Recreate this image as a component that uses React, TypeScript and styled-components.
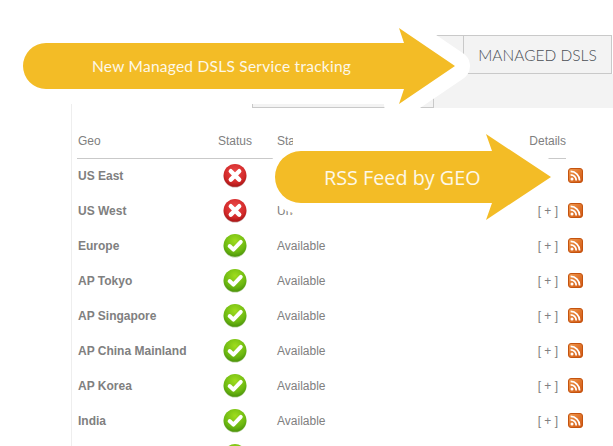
import React from "react";
import styled, { createGlobalStyle } from "styled-components";

const Global = createGlobalStyle`
  html, body { margin: 0; padding: 0; background: #fff; }
  body { font-family: "Liberation Sans", Arial, sans-serif; }
`;

const Page = styled.div`
  position: relative;
  width: 613px;
  height: 446px;
  overflow: hidden;
  background: #fff;
`;

const Header = styled.header`
  height: 108px;
  padding-top: 35px;
  box-sizing: border-box;
  display: flex;
  flex-direction: column;
`;

const TabRow = styled.nav`
  height: 39px;
  display: flex;
  justify-content: flex-end;
  flex: none;
`;

const Tab = styled.div<{ $w: number }>`
  width: ${(p) => p.$w}px;
  box-sizing: border-box;
  background: #f3f3f3;
  border: 1px solid #c9c9c9;
  border-right-width: ${(p) => (p.$w > 100 ? 1 : 0)}px;
  margin-right: ${(p) => (p.$w > 100 ? 1 : 0)}px;
  display: flex;
  align-items: center;
  justify-content: center;
  font-family: "Lato", sans-serif;
  font-weight: 300;
  font-size: 15.5px;
  letter-spacing: 0;
  color: #4a4f55;
`;

const Band = styled.div`
  flex: 1;
  display: flex;
`;

const BandSpacer = styled.div`
  width: 252px;
`;

const SelectBox = styled.div`
  width: 182px;
  height: 34px;
  box-sizing: border-box;
  background: #f3f3f3;
  border: 1px solid #c9c9c9;
  border-top: 0;
`;

const BandFill = styled.div`
  flex: 1;
  background: #f3f3f3;
`;

const Panel = styled.main`
  margin: -35px 0 0 71px;
  padding: 35px 0 0 5px;
  width: 506px;
  height: 400px;
  border-left: 1px solid #eee;
`;

const Grid = styled.div`
  display: grid;
  grid-template-columns: 126px 64px 1fr 86px;
`;

const HeadRow = styled(Grid)`
  height: 51px;
  width: 489px;
  margin-bottom: -1px;
  padding-bottom: 9px;
  box-sizing: border-box;
  align-items: end;
  border-bottom: 1px solid #c9c9c9;
  font-size: 12px;
  color: #808080;
  line-height: 16px;
`;

const Row = styled(Grid)`
  height: 35px;
  align-items: center;
  font-size: 12px;
  color: #808080;
`;

const GeoName = styled.div`
  font-weight: 700;
  padding-left: 1px;
`;

const HeadGeo = styled.div`
  padding-left: 1px;
`;

const HeadStatus = styled.div`
  text-align: center;
`;

const HeadMsg = styled.div`
  padding-left: 10px;
`;

const HeadDetails = styled.div`
  text-align: right;
`;

const StatusCell = styled.div`
  display: flex;
  justify-content: center;
`;

const Message = styled.div`
  padding-left: 10px;
`;

const DetailsCell = styled.div`
  display: flex;
  align-items: center;
  justify-content: flex-end;
  gap: 10px;
  font-size: 12px;
`;

const Callout = styled.div<{ $l: number; $t: number; $w: number; $h: number }>`
  position: absolute;
  left: ${(p) => p.$l}px;
  top: ${(p) => p.$t}px;
  width: ${(p) => p.$w}px;
  height: ${(p) => p.$h}px;
`;

const CalloutArt = styled.svg`
  position: absolute;
  inset: 0;
  overflow: visible;
`;

const CalloutLabel = styled.div<{ $x: number; $font: string; $size: number; $ls: number }>`
  position: absolute;
  inset: 0;
  display: flex;
  align-items: center;
  padding-left: ${(p) => p.$x}px;
  font-family: ${(p) => p.$font};
  font-size: ${(p) => p.$size}px;
  letter-spacing: ${(p) => p.$ls}px;
  color: #fdf8e8;
  white-space: nowrap;
`;

const Bad = () => (
  <svg width="24" height="24" viewBox="0 0 24 24">
    <defs>
      <radialGradient id="rg" cx="50%" cy="35%" r="65%">
        <stop offset="0" stopColor="#ea4a4a" />
        <stop offset="0.7" stopColor="#d32a2a" />
        <stop offset="1" stopColor="#a81414" />
      </radialGradient>
    </defs>
    <circle cx="12" cy="12.2" r="11.4" fill="#c9a8a8" />
    <circle cx="12" cy="11.4" r="11.4" fill="url(#rg)" />
    <path d="M7.8 7.2 L16.2 15.6 M16.2 7.2 L7.8 15.6" stroke="#fff" strokeWidth="4.4" strokeLinecap="round" />
  </svg>
);

const Good = () => (
  <svg width="24" height="24" viewBox="0 0 24 24">
    <defs>
      <radialGradient id="gg" cx="50%" cy="30%" r="70%">
        <stop offset="0" stopColor="#9fdc1e" />
        <stop offset="0.7" stopColor="#6cb811" />
        <stop offset="1" stopColor="#4b9309" />
      </radialGradient>
    </defs>
    <circle cx="12" cy="12.2" r="11.4" fill="#b5cf9c" />
    <circle cx="12" cy="11.4" r="11.4" fill="url(#gg)" />
    <path d="M6.6 12 L10.4 15.6 L17.8 7.8" fill="none" stroke="#fff" strokeWidth="3.9" strokeLinecap="round" strokeLinejoin="round" />
  </svg>
);

const Rss = () => (
  <svg width="15" height="15" viewBox="0 0 15 15">
    <defs>
      <linearGradient id="og" x1="0" y1="0" x2="1" y2="1">
        <stop offset="0" stopColor="#f29a4e" />
        <stop offset="1" stopColor="#cf5410" />
      </linearGradient>
    </defs>
    <rect x="0.5" y="0.5" width="14" height="14" rx="2.5" fill="url(#og)" stroke="#c4530f" />
    <circle cx="4" cy="11" r="1.5" fill="#fff" />
    <path d="M2.6 6.8 A5.6 5.6 0 0 1 8.2 12.4" fill="none" stroke="#fff" strokeWidth="1.7" />
    <path d="M2.6 3.4 A9 9 0 0 1 11.6 12.4" fill="none" stroke="#fff" strokeWidth="1.7" />
  </svg>
);

const rows: { geo: string; up: boolean }[] = [
  { geo: "US East", up: false },
  { geo: "US West", up: false },
  { geo: "Europe", up: true },
  { geo: "AP Tokyo", up: true },
  { geo: "AP Singapore", up: true },
  { geo: "AP China Mainland", up: true },
  { geo: "AP Korea", up: true },
  { geo: "India", up: true },
  { geo: "", up: true },
];

export default function App() {
  return (
    <Page>
      <Global />
      <Header>
        <TabRow>
          <Tab $w={29} />
          <Tab $w={149}>MANAGED DSLS</Tab>
        </TabRow>
        <Band>
          <BandSpacer />
          <SelectBox />
          <BandFill />
        </Band>
      </Header>
      <Panel>
        <HeadRow>
          <HeadGeo>Geo</HeadGeo>
          <HeadStatus>Status</HeadStatus>
          <HeadMsg>Status</HeadMsg>
          <HeadDetails>Details</HeadDetails>
        </HeadRow>
        {rows.map((r, i) => (
          <Row key={i}>
            <GeoName>{r.geo}</GeoName>
            <StatusCell>{r.up ? <Good /> : <Bad />}</StatusCell>
            {r.geo && <Message>{r.up ? "Available" : "Unavailable"}</Message>}
            {r.geo && (
              <DetailsCell>
                <span>[ + ]</span>
                <Rss />
              </DetailsCell>
            )}
          </Row>
        ))}
      </Panel>
      <Callout $l={23} $t={28} $w={432} $h={76}>
        <CalloutArt width="432" height="76" viewBox="0 0 432 76">
          <path d="M23 15 H381 L376 0 L432 38 L376 76 L381 61 H23 A23 23 0 0 1 23 15 Z" fill="#fff" stroke="#fff" strokeWidth="30" strokeLinejoin="round" />
          <path d="M23 15 H381 L376 0 L432 38 L376 76 L381 61 H23 A23 23 0 0 1 23 15 Z" fill="#f3bc26" />
        </CalloutArt>
        <CalloutLabel $x={69} $font={'"Lato", sans-serif'} $size={15.5} $ls={0.25}>
          New Managed DSLS Service tracking
        </CalloutLabel>
      </Callout>
      <Callout $l={275} $t={134} $w={276} $h={86}>
        <CalloutArt width="276" height="86" viewBox="0 0 276 86">
          <path d="M26 17 H217 V69 H26 A26 26 0 0 1 26 17 Z" fill="#fff" stroke="#fff" strokeWidth="18" strokeLinejoin="round" transform="translate(0 2)" />
          <rect x="18" y="-6" width="205" height="98" fill="#fff" />
          <path d="M211 0 L276 43 L211 86 Z" fill="#fff" stroke="#fff" strokeWidth="28" strokeLinejoin="round" />
          <path d="M26 17 H217 L211 0 L276 43 L211 86 L217 69 H26 A26 26 0 0 1 26 17 Z" fill="#f3bc26" />
        </CalloutArt>
        <CalloutLabel $x={49} $font={'"Open Sans", sans-serif'} $size={19.8} $ls={0}>
          RSS Feed by GEO
        </CalloutLabel>
      </Callout>
    </Page>
  );
}
